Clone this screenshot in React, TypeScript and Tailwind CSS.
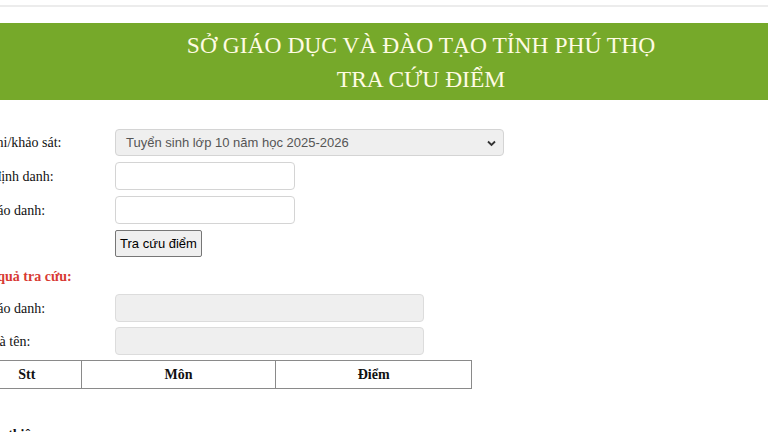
export default function App() {
  const serif = { fontFamily: '"Liberation Serif", "Times New Roman", serif' };
  const sans = { fontFamily: '"Liberation Sans", Arial, sans-serif' };

  return (
    <div className="w-[768px] h-[432px] overflow-hidden bg-white" style={serif}>
      <div className="mt-[5px] h-[2px] bg-[#ececec]" />
      <div className="mt-[16px] h-[77px] bg-[#76a92a] pl-[74px] flex flex-col items-center justify-center text-[#fffbe3] text-[23.5px] leading-[34px]">
        <div>SỞ GIÁO DỤC VÀ ĐÀO TẠO TỈNH PHÚ THỌ</div>
        <div>TRA CỨU ĐIỂM</div>
      </div>

      <div className="ml-[-28px] mt-[29px] text-[14px] text-[#111]">
        <div className="flex flex-col gap-[6px]">
          <div className="flex items-center">
            <label className="w-[143px]">Kỳ thi/khảo sát:</label>
            <div
              className="relative w-[389px] h-[27px] rounded-[4px] border border-[#d4d4d4] bg-[#efefef] flex items-center pl-[10px] text-[13px] text-[#555]"
              style={sans}
            >
              Tuyển sinh lớp 10 năm học 2025-2026
              <svg className="absolute right-[7px] top-[9px]" width="9" height="8" viewBox="0 0 9 8">
                <path d="M1 2.5 L4.5 6 L8 2.5" fill="none" stroke="#333" strokeWidth="1.8" />
              </svg>
            </div>
          </div>
          <div className="flex items-center">
            <label className="w-[143px]">Mã định danh:</label>
            <div className="w-[180px] h-[28px] rounded-[4px] border border-[#d4d4d4] bg-white" />
          </div>
          <div className="flex items-center">
            <label className="w-[143px]">Số báo danh:</label>
            <div className="w-[180px] h-[28px] rounded-[4px] border border-[#d4d4d4] bg-white" />
          </div>
          <div className="flex items-center">
            <div className="w-[143px]" />
            <button
              className="w-[87px] h-[27px] rounded-[2px] border border-[#767676] bg-[#efefef] text-[13px] text-black"
              style={sans}
            >
              Tra cứu điểm
            </button>
          </div>
        </div>

        <div className="mt-[11px] font-bold text-[#d83a34] leading-[18px]">Kết quả tra cứu:</div>

        <div className="mt-[8px] flex flex-col gap-[5px]">
          <div className="flex items-center">
            <label className="w-[143px]">Số báo danh:</label>
            <div className="w-[309px] h-[28px] rounded-[4px] border border-[#dcdcdc] bg-[#efefef]" />
          </div>
          <div className="flex items-center">
            <label className="w-[143px]">Họ và tên:</label>
            <div className="w-[309px] h-[28px] rounded-[4px] border border-[#dcdcdc] bg-[#efefef]" />
          </div>
        </div>

        <table className="mt-[5px] w-[500px] border-collapse">
          <thead>
            <tr className="h-[28px]">
              <th className="w-[109px] border border-[#8a8a8a] font-bold">Stt</th>
              <th className="w-[195px] border border-[#8a8a8a] font-bold">Môn</th>
              <th className="w-[196px] border border-[#8a8a8a] font-bold">Điểm</th>
            </tr>
          </thead>
        </table>

        <div className="mt-[35px] font-bold">Hoàn thiện</div>
      </div>
    </div>
  );
}
